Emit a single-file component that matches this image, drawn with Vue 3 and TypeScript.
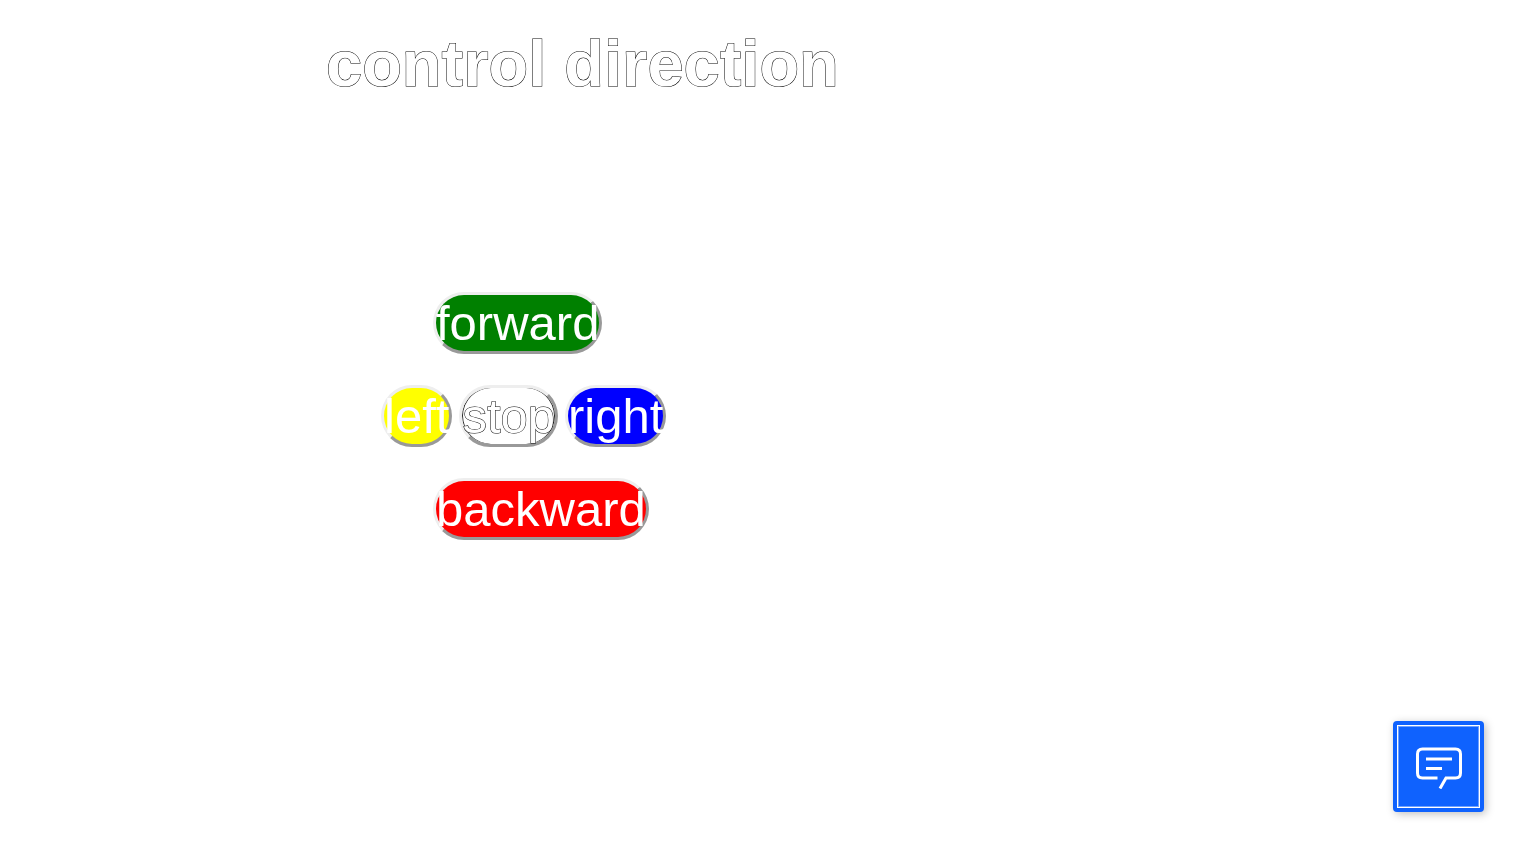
<script setup lang="ts">
import { ref } from 'vue'

type Direction = 'forward' | 'left' | 'stop' | 'right' | 'backward'

const rows: Direction[][] = [['forward'], ['left', 'stop', 'right'], ['backward']]
const current = ref<Direction>('stop')

function move(direction: Direction): void {
  current.value = direction
}
</script>

<template>
  <main class="page">
    <h1 class="title">control direction</h1>
    <div class="pad">
      <div v-for="row in rows" :key="row[0]" class="row" :class="{ wide: row.length > 1 }">
        <button
          v-for="direction in row"
          :key="direction"
          type="button"
          class="control"
          :class="direction"
          @click="move(direction)"
        >{{ direction }}</button>
      </div>
    </div>
    <button type="button" class="chat" aria-label="Open chat">
      <svg class="chat-icon" viewBox="0 0 47 45" fill="none" stroke="#fff" stroke-width="3" aria-hidden="true">
        <path d="M22.500 34H7.500Q2.500 34 2.500 29V10Q2.500 5 7.500 5H40.500Q45.500 5 45.500 10V29Q45.500 34 40.500 34H31L25 44.500" />
        <path d="M11 15H37M11 24.500H27" />
      </svg>
    </button>
  </main>
</template>

<style>
body {
  margin: 0;
  background: #fff;
}
</style>

<style scoped>
.page {
  font-family: "Liberation Sans", Arial, sans-serif;
  padding: 27px 0 0 326px;
}

.title {
  margin: 0;
  color: #fff;
  font-size: 65px;
  font-weight: 700;
  line-height: 73px;
  -webkit-text-stroke: 1px #000;
  paint-order: stroke fill;
}

.pad {
  display: flex;
  flex-direction: column;
  gap: 31px;
  margin: 192px 0 0 107px;
}

.row {
  display: flex;
  gap: 7px;
}

.wide {
  margin-left: -52px;
}

.control {
  box-sizing: border-box;
  height: 62px;
  margin: 0;
  padding: 0;
  border: 3px solid;
  border-color: #eee #999 #999 #eee;
  border-radius: 32px;
  color: #fff;
  font-family: inherit;
  font-size: 49px;
  line-height: 56px;
  cursor: pointer;
}

.forward {
  background: #008000;
}

.left {
  background: #ff0;
}

.stop {
  background: #fff;
  box-shadow: inset 1px 0 #222, inset -1px 0 #222;
  -webkit-text-stroke: 1px #000;
  paint-order: stroke fill;
}

.right {
  background: #00f;
}

.backward {
  background: #f00;
}

.chat {
  position: fixed;
  right: 43px;
  bottom: 41px;
  box-sizing: border-box;
  display: flex;
  align-items: center;
  justify-content: center;
  width: 91px;
  height: 91px;
  padding: 0;
  border: 4px solid #0f62fe;
  border-radius: 4px;
  background: #0f62fe;
  box-shadow: 2px 2px 8px rgba(0, 0, 0, 0.25), inset 0 0 0 1px #fff, inset 0 0 0 2px rgba(255, 255, 255, 0.4);
  cursor: pointer;
}

.chat-icon {
  width: 47px;
  height: 45px;
}
</style>
